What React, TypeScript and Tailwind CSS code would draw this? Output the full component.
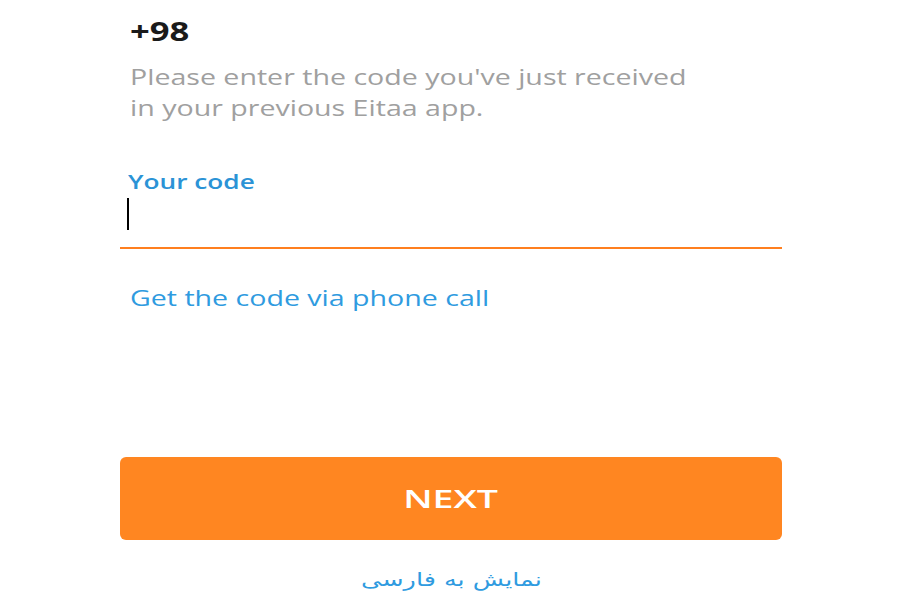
export default function App() {
  return (
    <div
      className="w-[900px] h-[600px] bg-white overflow-hidden"
      style={{ fontFamily: '"Open Sans", "Noto Sans", sans-serif' }}
    >
      <div className="ml-[120px] w-[662px] flex flex-col">
        <div className="pl-[10px] pt-[14px] h-[60px]">
          <span className="inline-block origin-left scale-x-[1.33] text-[26px] font-bold leading-[34px] text-[#1a1a1a]">
            +98
          </span>
        </div>
        <div className="pl-[10px] mt-[2px]">
          <p className="origin-left scale-x-[1.36] text-[21px] leading-[31px] text-[#a0a0a0] whitespace-nowrap">
            Please enter the code you've just received
            <br />
            in your previous Eitaa app.
          </p>
        </div>

        {/* code input */}
        <div className="mt-[45px] pl-[8px]">
          <span className="inline-block origin-left scale-x-[1.38] text-[19px] font-semibold leading-[26px] text-[#2b93d6]">
            Your code
          </span>
        </div>
        <div className="h-[54px] pl-[7px] pt-[3px] border-b-2 border-[#ff7f1f]">
          <div className="w-[2px] h-[32px] bg-black" />
        </div>

        <div className="mt-[34px] pl-[10px]">
          <span className="inline-block origin-left scale-x-[1.36] text-[21px] leading-[30px] text-[#2f9be0] whitespace-nowrap">
            Get the code via phone call
          </span>
        </div>

        <button className="mt-[144px] h-[83px] w-full rounded-[6px] bg-[#ff8621] text-white">
          <span className="inline-block scale-x-[1.5] text-[25px] font-semibold">NEXT</span>
        </button>

        <div className="mt-[25px] flex justify-center">
          <span
            dir="rtl"
            className="inline-block scale-x-[1.34] text-[19px] leading-[28px] text-[#2f9be0]"
            style={{ fontFamily: '"DejaVu Sans", "Noto Sans", sans-serif' }}
          >
            نمایش به فارسی
          </span>
        </div>
      </div>
    </div>
  );
}
